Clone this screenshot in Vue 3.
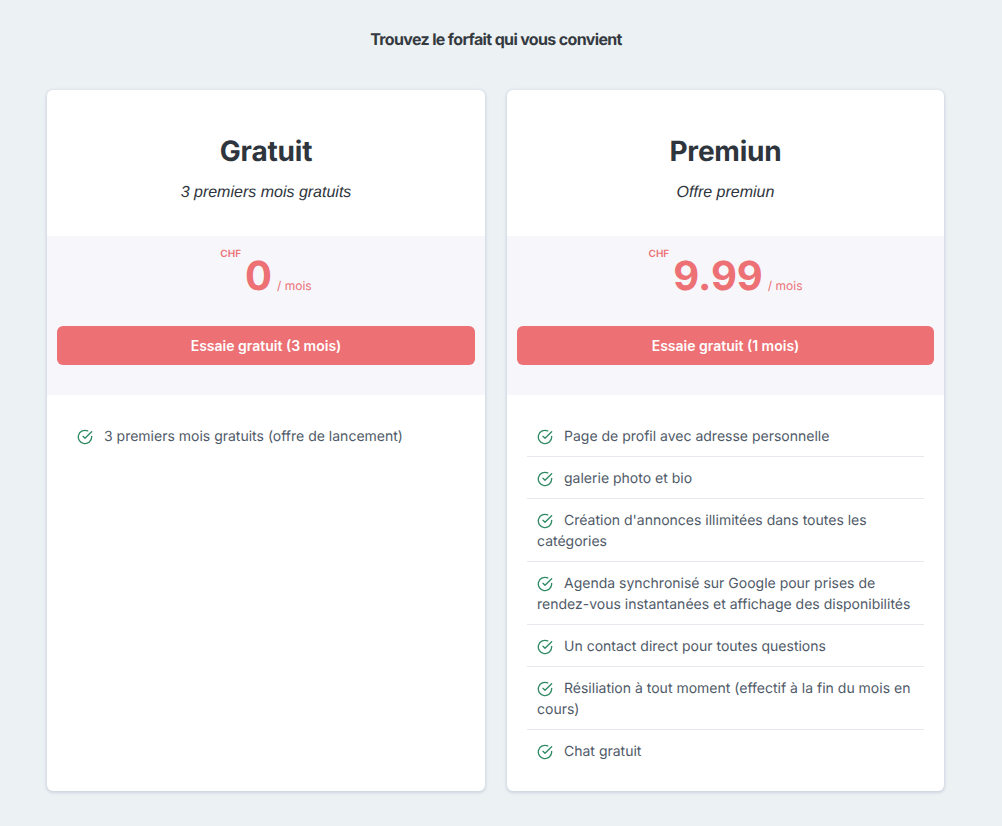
<script setup>
const plans = [
  {
    name: 'Gratuit', sub: '3 premiers mois gratuits', price: '0', cta: 'Essaie gratuit (3 mois)',
    features: ['3 premiers mois gratuits (offre de lancement)'],
  },
  {
    name: 'Premiun', sub: 'Offre premiun', price: '9.99', cta: 'Essaie gratuit (1 mois)',
    features: [
      'Page de profil avec adresse personnelle',
      'galerie photo et bio',
      "Création d'annonces illimitées dans toutes les catégories",
      'Agenda synchronisé sur Google pour prises de rendez-vous instantanées et affichage des disponibilités',
      'Un contact direct pour toutes questions',
      'Résiliation à tout moment (effectif à la fin du mois en cours)',
      'Chat gratuit',
    ],
  },
]
</script>

<template>
  <main class="page">
    <h2 class="title">Trouvez le forfait qui vous convient</h2>
    <div class="cards">
      <section v-for="p in plans" :key="p.name" class="card">
        <header class="head">
          <h3 class="name">{{ p.name }}</h3>
          <p class="sub">{{ p.sub }}</p>
        </header>
        <div class="pricing">
          <div class="price">
            <span class="cur">CHF</span>
            <span class="amount">{{ p.price }}</span>
            <span class="per">/ mois</span>
          </div>
          <button class="cta">{{ p.cta }}</button>
        </div>
        <ul class="list">
          <li v-for="f in p.features" :key="f" class="item">
            <svg class="check" viewBox="0 0 24 24" fill="none" stroke="currentColor" stroke-width="2" stroke-linecap="round" stroke-linejoin="round">
              <path d="M22 11.08V12a10 10 0 1 1-5.93-9.14" />
              <polyline points="22 4 12 14.01 9 11.01" />
            </svg>{{ f }}
          </li>
        </ul>
      </section>
    </div>
  </main>
</template>

<style>
html, body { margin: 0; background: #ecf1f4; }
</style>

<style scoped>
.page {
  box-sizing: border-box;
  height: 826px;
  padding-top: 30px;
  background: #ecf1f4;
  font-family: Inter, "Liberation Sans", sans-serif;
  text-rendering: geometricPrecision;
  overflow: hidden;
}
.title {
  margin: 0 0 41px;
  padding-right: 10px;
  text-align: center;
  font-size: 16px;
  line-height: 19px;
  font-weight: 700;
  letter-spacing: -0.65px;
  color: #343a40;
}
.cards {
  display: grid;
  grid-template-columns: 438px 437px;
  gap: 22px;
  margin-left: 47px;
}
.card {
  height: 701px;
  background: #fff;
  border-radius: 6px;
  box-shadow: 0 1px 3px 1px rgba(140, 152, 180, 0.3);
  overflow: hidden;
}
.head {
  height: 146px;
  box-sizing: border-box;
  padding-top: 43px;
  text-align: center;
}
.name {
  margin: 0;
  font-size: 28px;
  line-height: 36px;
  font-weight: 700;
  letter-spacing: -0.2px;
  color: #2f353d;
}
.sub {
  margin: 13px 0 0;
  font-family: "Liberation Sans", Arial, sans-serif;
  font-style: italic;
  font-size: 16px;
  line-height: 22px;
  color: #2f353d;
}
.pricing {
  height: 159px;
  box-sizing: border-box;
  padding: 0 10px;
  background: #f6f6fb;
}
.price {
  height: 90px;
  display: flex;
  justify-content: center;
  align-items: flex-start;
  color: #ec7074;
}
.cur {
  margin-top: 11px;
  font-size: 10px;
  line-height: 14px;
  font-weight: 600;
}
.amount {
  margin: 15px 5px 0 4px;
  font-size: 40px;
  line-height: 50px;
  font-weight: 700;
}
.per {
  margin-top: 41px;
  font-size: 12px;
  line-height: 18px;
}
.cta {
  display: block;
  width: 100%;
  height: 39px;
  padding: 0;
  border: 0;
  border-radius: 6px;
  background: #ec7074;
  color: #fff;
  font-family: inherit;
  font-size: 14px;
  font-weight: 600;
}
.list {
  margin: 0;
  padding: 20px 20px 0;
  list-style: none;
}
.item {
  padding: 11px 10px 9px;
  border-top: 1px solid #e5e8ec;
  font-size: 14px;
  line-height: 21px;
  color: #4f5a68;
}
.item:first-child { border-top: 0; }
.check {
  width: 16px;
  height: 16px;
  margin-right: 11px;
  vertical-align: -4px;
  color: #2f8a63;
}
</style>
